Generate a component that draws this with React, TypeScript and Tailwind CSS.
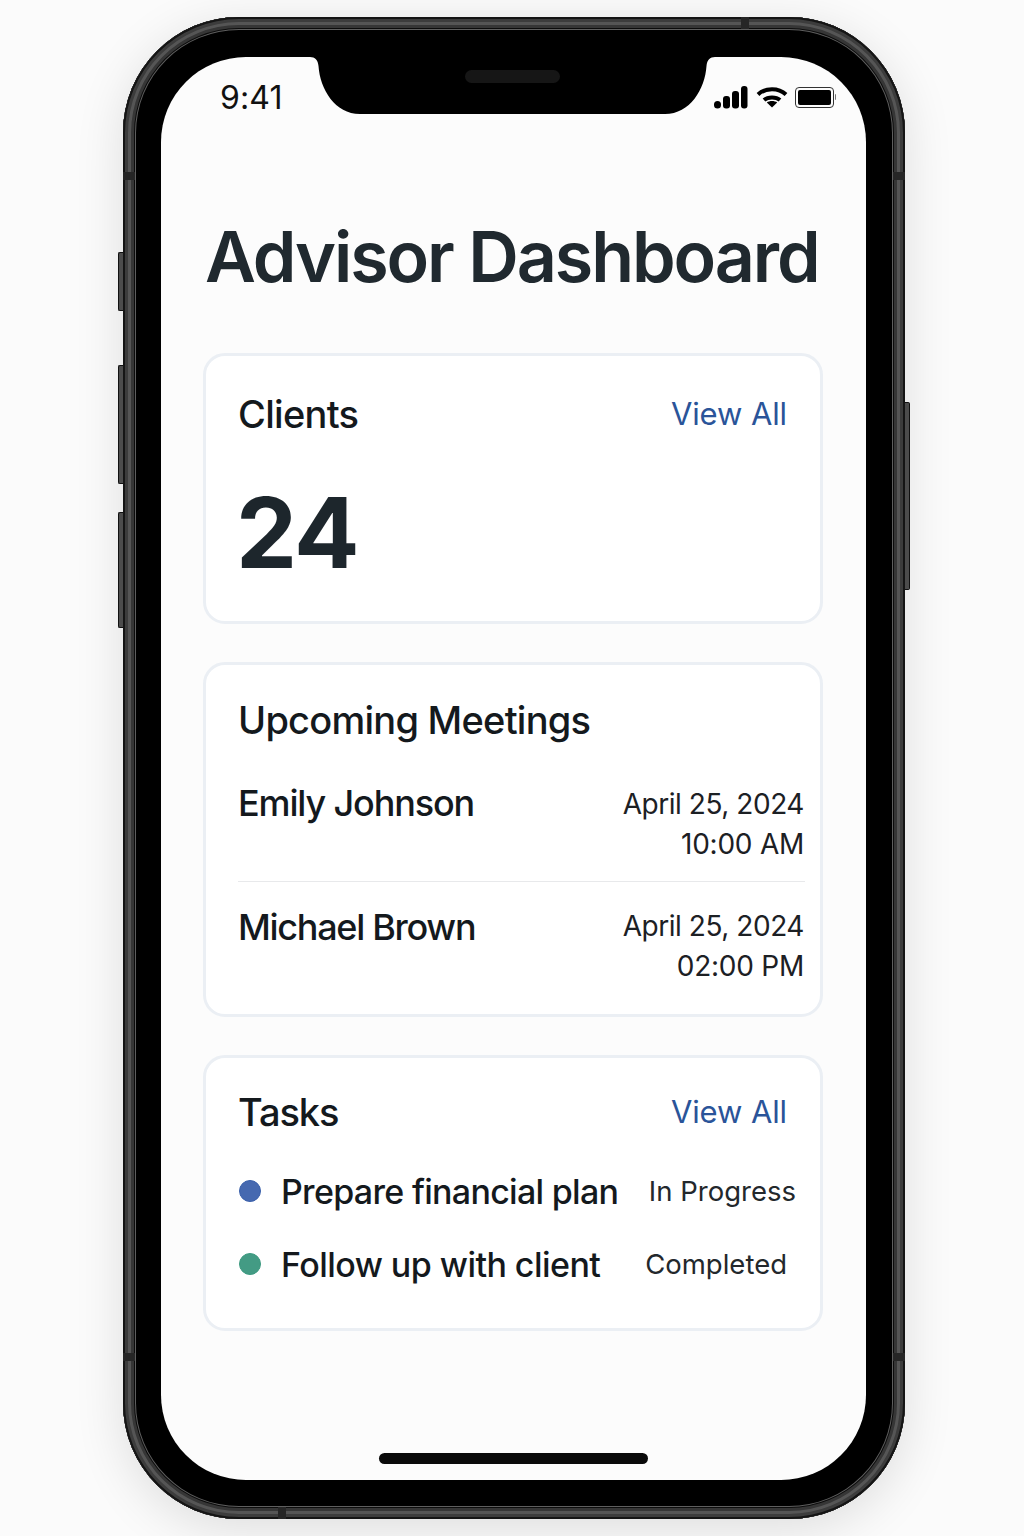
const fontStack = { fontFamily: "Inter, sans-serif" }

function SignalIcon() {
  return (
    <svg width="34" height="23" viewBox="0 0 34 23" fill="#000">
      <rect x="0" y="15" width="7" height="7.5" rx="3.5" />
      <rect x="9" y="10" width="7" height="12.5" rx="3" />
      <rect x="18" y="5" width="7" height="17.5" rx="3" />
      <rect x="27" y="0" width="6.5" height="22.5" rx="3" />
    </svg>
  )
}

function WifiIcon() {
  return (
    <svg width="32" height="22" viewBox="0 0 32 22" fill="none" stroke="#000" strokeWidth="4">
      <path d="M2 8.5C9.5 1.5 22.5 1.5 30 8.5" />
      <path d="M8 14C12 10.5 20 10.5 24 14" />
      <path d="M16 21.5L10.8 16.6C13.5 14.6 18.5 14.6 21.2 16.6Z" fill="#000" stroke="none" />
    </svg>
  )
}

function BatteryIcon() {
  return (
    <div className="flex items-center gap-[1px]">
      <div className="w-[39px] h-[21px] rounded-[4px] border-[1.5px] border-[#333] p-[2px]">
        <div className="w-full h-full rounded-[2px] bg-black" />
      </div>
      <div className="w-[1.5px] h-[6px] rounded-r-sm bg-[#777]" />
    </div>
  )
}

function ViewAll() {
  return <span className="text-[31px] leading-[40px] text-[#2a5499] tracking-[-0.1px] mr-[18px]">View All</span>
}

export default function App() {
  return (
    <div className="min-h-[1536px] bg-[#fbfbfb] pt-[17px] overflow-hidden" style={fontStack}>
      <div className="relative ml-[123px] w-[782px] h-[1502px] rounded-[116px] bg-black p-[40px] shadow-[inset_0_0_0_2px_#151515,inset_0_0_0_5px_#3c3c3c,inset_0_0_0_8px_#555555,inset_0_0_0_11px_#363636,inset_0_0_0_12px_#0c0c0c,inset_0_0_0_13px_#5e5e5e,0_10px_50px_rgba(0,0,0,0.12)]">
        {/* side buttons */}
        <div className="absolute -left-[5px] top-[235px] w-[5px] h-[59px] rounded-l-[2px] bg-[#4c4c4c] border border-r-0 border-[#111]" />
        <div className="absolute -left-[5px] top-[348px] w-[5px] h-[119px] rounded-l-[2px] bg-[#4c4c4c] border border-r-0 border-[#111]" />
        <div className="absolute -left-[5px] top-[495px] w-[5px] h-[116px] rounded-l-[2px] bg-[#4c4c4c] border border-r-0 border-[#111]" />
        <div className="absolute -right-[5px] top-[385px] w-[5px] h-[188px] rounded-r-[2px] bg-[#4c4c4c] border border-l-0 border-[#111]" />

        {/* antenna bands */}
        <div className="absolute left-0 top-[155px] w-[12px] h-[8px] bg-[#262626]" />
        <div className="absolute right-0 top-[155px] w-[12px] h-[8px] bg-[#262626]" />
        <div className="absolute left-0 top-[1336px] w-[12px] h-[8px] bg-[#262626]" />
        <div className="absolute right-0 top-[1336px] w-[12px] h-[8px] bg-[#262626]" />
        <div className="absolute left-[618px] top-0 w-[8px] h-[12px] bg-[#262626]" />
        <div className="absolute left-[155px] bottom-0 w-[8px] h-[12px] bg-[#262626]" />

        {/* notch */}
        <svg className="absolute left-[187px] top-[40px]" width="405" height="57" viewBox="0 0 405 57" fill="#000">
          <path d="M0 0C5 0 8 3 8.5 9C10 32 25 57 50 57H355C380 57 395 32 396.5 9C397 3 400 0 405 0Z" />
          <rect x="155" y="13" width="95" height="13" rx="6.5" fill="#161616" />
        </svg>

        <div className="h-[1423px] w-[705px] -ml-[2px] rounded-[85px] bg-[#fcfcfc] flex flex-col">
          <div className="flex items-center justify-between h-[26px] mt-[28px] pl-[59px] pr-[30px]">
            <span className="text-[32px] leading-[26px] font-normal text-[#111] tracking-[0.1px]">9:41</span>
            <div className="flex items-center pb-[2px]">
              <SignalIcon />
              <div className="ml-[8px] mr-[7px]">
                <WifiIcon />
              </div>
              <BatteryIcon />
            </div>
          </div>

          <h1 className="mt-[103px] ml-[44px] text-[70px] leading-[86px] font-semibold tracking-[-2.1px] text-[#20292f] whitespace-nowrap">
            Advisor Dashboard
          </h1>

          <div className="mt-[53px] ml-[42px] w-[620px] flex flex-col gap-[38px]">
            <section className="h-[271px] rounded-[22px] border-[3px] border-[#ebeff4] bg-white pl-[32px] pr-[15px] pt-[38px]">
              <div className="flex items-center justify-between h-[40px]">
                <h2 className="text-[38px] leading-[40px] font-[450] tracking-[-0.7px] text-[#14191d]">Clients</h2>
                <ViewAll />
              </div>
              <p className="mt-[44px] -ml-[2px] text-[97px] leading-[110px] font-bold tracking-[-1.5px] text-[#1d262c]">24</p>
            </section>

            <section className="h-[355px] rounded-[22px] border-[3px] border-[#ebeff4] bg-white pl-[32px] pr-[15px] pt-[35px]">
              <h2 className="text-[38px] leading-[40px] font-[450] tracking-[-0.75px] text-[#14191d]">Upcoming Meetings</h2>
              <div className="mt-[44px] h-[98px] flex justify-between border-b border-[#e8e9eb]">
                <span className="-mt-[1px] text-[36px] leading-[40px] font-[450] tracking-[-1.15px] text-[#14191d]">Emily Johnson</span>
                <div className="text-right text-[28px] leading-[40px] text-[#1c2024] mr-[1px]">
                  <div className="tracking-[-0.45px]">April 25, 2024</div>
                  <div className="tracking-[-0.25px]">10:00 AM</div>
                </div>
              </div>
              <div className="mt-[24px] flex justify-between">
                <span className="pt-[1px] text-[36px] leading-[40px] font-[450] tracking-[-1.3px] text-[#14191d]">Michael Brown</span>
                <div className="text-right text-[28px] leading-[40px] text-[#1c2024] mr-[1px]">
                  <div className="tracking-[-0.45px]">April 25, 2024</div>
                  <div className="tracking-[-0.25px]">02:00 PM</div>
                </div>
              </div>
            </section>

            <section className="h-[276px] rounded-[22px] border-[3px] border-[#ebeff4] bg-white pl-[32px] pr-[15px] pt-[34px]">
              <div className="flex items-center justify-between h-[40px]">
                <h2 className="text-[38px] leading-[40px] font-[450] tracking-[-1.1px] text-[#14191d]">Tasks</h2>
                <ViewAll />
              </div>
              <div className="mt-[37px] flex items-center h-[44px]">
                <span className="ml-[1px] w-[22px] h-[22px] rounded-full bg-[#4669b0] border border-[#3a60ab]" />
                <span className="ml-[20px] pt-[2px] text-[34px] leading-[44px] font-[450] tracking-[-0.7px] text-[#14191d] whitespace-nowrap">Prepare financial plan</span>
                <span className="ml-auto mr-[9px] text-[27.5px] leading-[44px] text-[#23282c]">In Progress</span>
              </div>
              <div className="mt-[29px] flex items-center h-[44px]">
                <span className="ml-[1px] w-[22px] h-[22px] rounded-full bg-[#439b84] border border-[#3c9a80]" />
                <span className="ml-[20px] pt-[1px] text-[34px] leading-[44px] font-[450] tracking-[-0.55px] text-[#14191d] whitespace-nowrap">Follow up with client</span>
                <span className="ml-auto mr-[18px] text-[27.5px] leading-[44px] text-[#23282c]">Completed</span>
              </div>
            </section>
          </div>

          <div className="mt-auto mb-[16px] ml-[218px] w-[269px] h-[11px] rounded-full bg-[#0a0a0a]" />
        </div>
      </div>
    </div>
  )
}
